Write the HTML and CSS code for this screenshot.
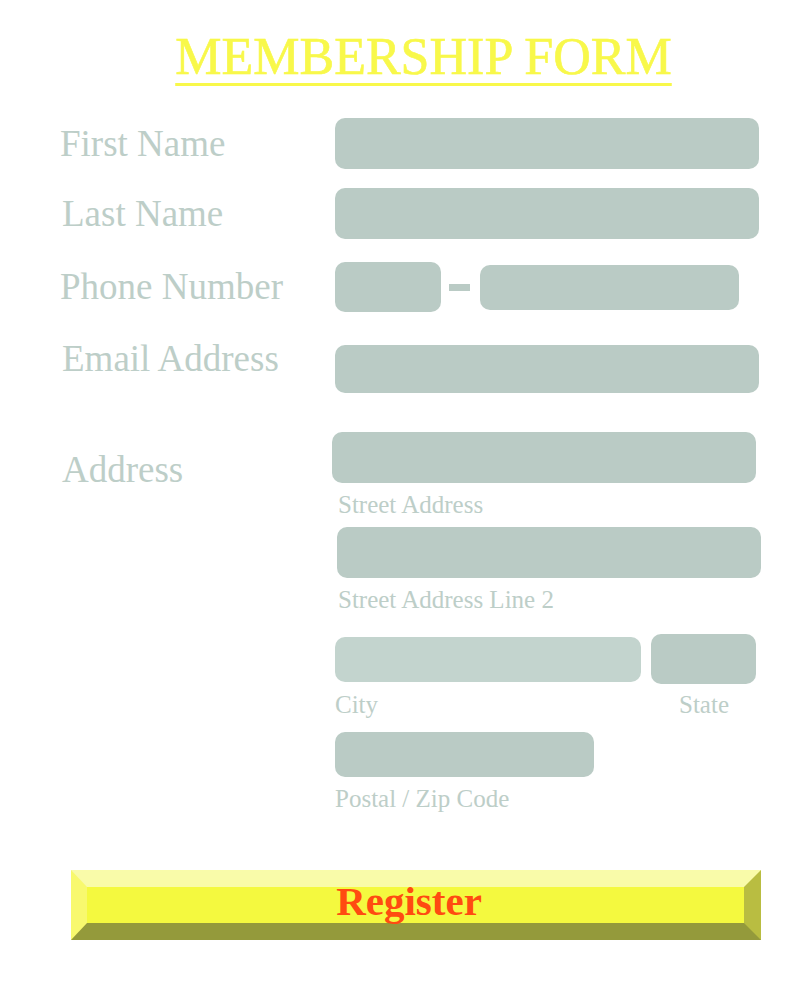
FILE: index.html
```
<!DOCTYPE html>
<html lang="en">
<head>
<meta charset="utf-8">
<title>Membership Form</title>
<link rel="stylesheet" href="styles.css">
</head>
<body>
<div class="page">
  <h1 class="title">MEMBERSHIP FORM</h1>
  <form class="form">
    <div class="row row-first">
      <label class="label">First Name</label>
      <input class="field field-wide" type="text">
    </div>
    <div class="row row-last">
      <label class="label label-indent">Last Name</label>
      <input class="field field-wide" type="text">
    </div>
    <div class="row row-phone">
      <label class="label">Phone Number</label>
      <input class="field phone-a" type="text">
      <span class="dash"></span>
      <input class="field phone-b" type="text">
    </div>
    <div class="row row-email">
      <label class="label label-indent label-up">Email Address</label>
      <input class="field field-email" type="text">
    </div>
    <div class="row row-address">
      <label class="label label-indent label-address">Address</label>
      <div class="address">
        <input class="field street1" type="text">
        <span class="caption cap-street">Street Address</span>
        <input class="field street2" type="text">
        <span class="caption cap-street">Street Address Line 2</span>
        <div class="city-row">
          <input class="field city" type="text">
          <input class="field state" type="text">
        </div>
        <div class="caption-row">
          <span class="caption cap-city">City</span>
          <span class="caption">State</span>
        </div>
        <input class="field postal" type="text">
        <span class="caption cap-postal">Postal / Zip Code</span>
      </div>
    </div>
    <button class="register" type="button">Register</button>
  </form>
</div>
</body>
</html>
```
FILE: styles.css
```
html, body {
  margin: 0;
  padding: 0;
  background: #ffffff;
}

body {
  font-family: "Liberation Serif", "Times New Roman", serif;
}

.page {
  padding-top: 27px;
}

.title {
  margin: 0 0 31px 0;
  padding-left: 47px;
  text-align: center;
  font-size: 52px;
  font-weight: normal;
  line-height: 60px;
  color: #f8f84a;
  text-decoration: underline;
  text-decoration-thickness: 3px;
  text-underline-offset: 9px;
  -webkit-text-stroke: 0.6px #f8f84a;
}

.form {
  margin: 0;
}

.row {
  display: flex;
  align-items: center;
  padding-left: 60px;
}

.label {
  width: 275px;
  flex: none;
  font-size: 37px;
  line-height: 40px;
  color: #bdcec8;
}

.label-indent {
  margin-left: 2px;
  width: 273px;
}

.label-up {
  margin-top: -20px;
}

.field {
  display: block;
  box-sizing: border-box;
  border: 0;
  padding: 0;
  margin: 0;
  background: #bacbc5;
  border-radius: 10px;
  outline: none;
  flex: none;
}

.field-wide {
  width: 424px;
  height: 51px;
}

.row-last {
  margin-top: 19px;
}

.row-phone {
  margin-top: 23px;
}

.phone-a {
  width: 106px;
  height: 50px;
}

.dash {
  display: block;
  width: 21px;
  height: 7px;
  margin: 0 10px 0 8px;
  background: #bacbc5;
  flex: none;
}

.phone-b {
  width: 259px;
  height: 45px;
}

.row-email {
  margin-top: 33px;
}

.field-email {
  width: 424px;
  height: 48px;
}

.row-address {
  margin-top: 39px;
  align-items: flex-start;
}

.label-address {
  margin-top: 18px;
}

.address {
  display: flex;
  flex-direction: column;
  align-items: flex-start;
}

.street1 {
  width: 424px;
  height: 51px;
  margin-left: -3px;
}

.street2 {
  width: 424px;
  height: 51px;
  margin-left: 2px;
  margin-top: 8px;
}

.caption {
  font-size: 25px;
  line-height: 28px;
  color: #bdcec8;
}

.cap-street {
  margin-top: 8px;
  margin-left: 3px;
}

.city-row {
  display: flex;
  align-items: center;
  margin-top: 20px;
  height: 50px;
}

.city {
  width: 306px;
  height: 45px;
  background: #c3d4ce;
}

.state {
  width: 105px;
  height: 50px;
  margin-left: 10px;
}

.caption-row {
  display: flex;
  margin-top: 7px;
}

.cap-city {
  width: 344px;
}

.postal {
  width: 259px;
  height: 45px;
  margin-top: 13px;
}

.cap-postal {
  margin-top: 8px;
}

.register {
  display: block;
  box-sizing: border-box;
  margin: 57px 0 0 71px;
  width: 690px;
  height: 70px;
  padding: 0 13px 8px 0;
  border-style: solid;
  border-width: 17px 17px 17px 16px;
  border-top-color: #f9fba9;
  border-left-color: #f8f96e;
  border-bottom-color: #949a3b;
  border-right-color: #b9bd41;
  background: #f4f93f;
  font-family: "Liberation Serif", "Times New Roman", serif;
  font-size: 41px;
  font-weight: bold;
  line-height: 28px;
  color: #ff4b11;
  text-align: center;
  cursor: pointer;
}
```
